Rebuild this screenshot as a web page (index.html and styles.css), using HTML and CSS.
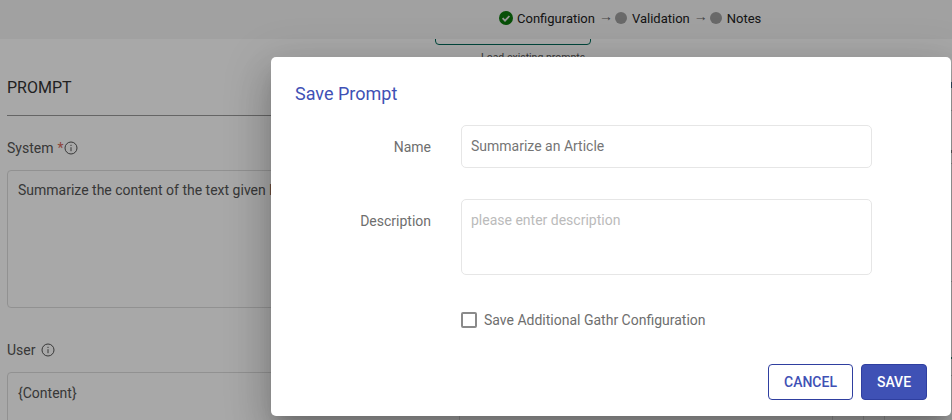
FILE: index.html
```html
<!DOCTYPE html>
<html lang="en">
<head>
    <meta charset="UTF-8">
    <title>Save Prompt</title>
    <link rel="stylesheet" href="styles.css">
</head>
<body>
    <div class="page">
        <!-- Steps -->
        <header class="topbar">
            <div class="step">
                <svg class="step-icon" viewBox="0 0 14 14" width="14" height="14">
                    <circle cx="7" cy="7" r="7" fill="#0d7a0d"/>
                    <path d="M3.6 7.2l2.4 2.4 4.4-4.6" fill="none" stroke="#e4e4e4" stroke-width="1.8"/>
                </svg>
                <span>Configuration</span>
            </div>
            <span class="arrow">→</span>
            <div class="step"><span class="dot"></span><span>Validation</span></div>
            <span class="arrow">→</span>
            <div class="step"><span class="dot"></span><span>Notes</span></div>
        </header>

        <div class="load-box">
            <div class="load-button"></div>
            <div class="load-text">Load existing prompts</div>
        </div>

        <div class="main">
            <!-- Prompt form behind the dialog -->
            <section class="prompt">
                <h3 class="prompt-title">PROMPT</h3>

                <div class="prompt-label">
                    <span>System</span><span class="required">*</span>
                    <svg class="info" viewBox="0 0 14 14" width="14" height="14">
                        <circle cx="7" cy="7" r="6" fill="none" stroke="#555" stroke-width="1"/>
                        <path d="M7 6.2v4M7 3.8v1.2" stroke="#555" stroke-width="1"/>
                    </svg>
                </div>
                <div class="prompt-box system-box">Summarize the content of the text given below</div>

                <div class="prompt-label user-label">
                    <span>User</span>
                    <svg class="info" viewBox="0 0 14 14" width="14" height="14">
                        <circle cx="7" cy="7" r="6" fill="none" stroke="#555" stroke-width="1"/>
                        <path d="M7 6.2v4M7 3.8v1.2" stroke="#555" stroke-width="1"/>
                    </svg>
                </div>
                <div class="prompt-box user-box">{Content}</div>
            </section>

            <!-- Right pane, almost all of it hidden by the dialog -->
            <aside class="side">
                <div class="rule rule-tab"></div>
                <div class="rule rule-line"></div>
                <div class="rule rule-head"></div>
                <div class="rule rule-sub"></div>
                <div class="rule rule-mid"></div>
                <div class="rule rule-teal"></div>
                <div class="rule rule-low"></div>
                <div class="side-table">
                    <div class="side-cell cell-wide"></div>
                    <div class="side-cell cell-mid"></div>
                    <div class="side-cell cell-small"></div>
                </div>
            </aside>
        </div>

        <!-- Dialog -->
        <div class="overlay">
            <div class="modal">
                <h2 class="modal-title">Save Prompt</h2>

                <div class="field name-field">
                    <label class="field-label">Name</label>
                    <input class="field-input" type="text" value="Summarize an Article">
                </div>

                <div class="field description-field">
                    <label class="field-label">Description</label>
                    <textarea class="field-input field-area" placeholder="please enter description"></textarea>
                </div>

                <label class="check-row">
                    <span class="check-box"></span>
                    <span>Save Additional Gathr Configuration</span>
                </label>

                <div class="modal-actions">
                    <button type="button" class="btn btn-outline">CANCEL</button>
                    <button type="button" class="btn btn-primary">SAVE</button>
                </div>
            </div>
        </div>
    </div>
</body>
</html>
```

FILE: styles.css
```css
* {
    box-sizing: border-box;
}

body {
    margin: 0;
    font-family: Roboto, sans-serif;
    color: #333;
}

.page {
    position: relative;
    width: 952px;
    height: 420px;
    overflow: hidden;
    background-color: #fff;
}

/* Steps */
.topbar {
    position: relative;
    z-index: 1;
    height: 39px;
    padding: 0 0 3px 499px;
    display: flex;
    align-items: center;
    gap: 4px;
    font-size: 13px;
    color: #222;
    background-color: #f5f5f5;
}

.step {
    display: flex;
    align-items: center;
    gap: 5px;
}

.step-icon {
    flex: none;
    margin-right: -1px;
}

.dot {
    width: 12px;
    height: 12px;
    border-radius: 50%;
    background-color: #a0a0a0;
}

.arrow {
    width: 12px;
    margin-bottom: 4px;
    font-size: 14px;
    line-height: 14px;
    color: #666;
}

.load-box {
    width: 156px;
    height: 57px;
    margin: -39px 0 0 435px;
    padding-top: 29px;
}

.load-button {
    height: 16px;
    border: 1px solid #006d5b;
    border-radius: 4px;
}

.load-text {
    margin-top: 6px;
    padding-left: 46px;
    font-size: 10.5px;
    white-space: nowrap;
    color: #555;
}

.main {
    display: flex;
    margin-top: -39px;
}

/* Prompt form */
.prompt {
    flex: none;
    width: 460px;
    padding: 39px 0 0 7px;
}

.prompt-title {
    margin: 0;
    height: 59px;
    padding-top: 20px;
    line-height: 22px;
    font-size: 16px;
    font-weight: 400;
    color: #333;
    border-bottom: 1px solid #999;
}

.prompt-label {
    display: flex;
    align-items: center;
    height: 20px;
    margin-top: 22px;
    font-size: 14px;
    color: #555;
}

.required {
    margin-left: 4px;
    color: #d9695a;
}

.info {
    margin-left: 1px;
}

.user-label .info {
    margin-left: 6px;
}

.prompt-box {
    margin-top: 12px;
    padding: 9px 10px;
    font-size: 14px;
    line-height: 20px;
    color: #555;
    white-space: nowrap;
    border: 1px solid #ddd;
    border-radius: 4px;
}

.system-box {
    height: 138px;
}

.user-label {
    margin-top: 32px;
}

.user-box {
    height: 60px;
    padding-top: 10px;
}

/* Right pane */
.side {
    flex: 1;
    display: flex;
    flex-direction: column;
}

.rule {
    height: 1px;
    background-color: #ccc;
}

.rule-tab {
    height: 6px;
    margin-top: 64px;
    background-color: #4a7090;
}

.rule-line {
    margin-top: 22px;
}

.rule-head {
    height: 3px;
    margin-top: 39px;
    background-color: #888;
}

.rule-sub {
    margin-top: 10px;
}

.rule-mid {
    margin-top: 117px;
}

.rule-teal {
    height: 2px;
    margin-top: 75px;
    background-color: #2a8a7a;
}

.rule-low {
    margin-top: 16px;
}

.side-table {
    display: flex;
    margin-top: 40px;
}

.side-cell {
    height: 10px;
    border-right: 1px solid #ddd;
}

.cell-wide {
    width: 373px;
}

.cell-mid {
    width: 31px;
}

.cell-small {
    width: 21px;
}

/* Dialog */
.overlay {
    position: absolute;
    z-index: 2;
    top: 0;
    right: 0;
    bottom: 0;
    left: 0;
    padding: 57px 0 0 271px;
    background-color: rgba(0, 0, 0, 0.34);
}

.modal {
    width: 680px;
    height: 359px;
    padding: 26px 24px 0;
    background-color: #fff;
    border-radius: 5px;
    box-shadow: 0 11px 15px -7px rgba(0,0,0,0.2), 0 24px 38px 3px rgba(0,0,0,0.14), 0 9px 46px 8px rgba(0,0,0,0.12);
}

.modal-title {
    margin: 0;
    font-size: 18px;
    line-height: 22px;
    font-weight: 400;
    color: #3f51b5;
}

.field {
    display: grid;
    grid-template-columns: 136px 411px;
    column-gap: 30px;
}

.name-field {
    margin-top: 20px;
}

.description-field {
    margin-top: 31px;
}

.field-label {
    padding-top: 13px;
    text-align: right;
    font-size: 14px;
    line-height: 18px;
    color: #6e6e6e;
}

.field-input {
    display: block;
    width: 100%;
    height: 43px;
    padding: 0 9px 1px;
    font-family: Roboto, sans-serif;
    font-size: 14px;
    color: #757575;
    border: 1px solid #e6e6e6;
    border-radius: 5px;
    outline: none;
}

.field-area {
    height: 76px;
    padding-top: 12px;
    resize: none;
}

.field-area::placeholder {
    color: #bbb;
}

.check-row {
    display: flex;
    align-items: center;
    gap: 7px;
    margin: 36px 0 0 166px;
    font-size: 14px;
    line-height: 18px;
    color: #6e6e6e;
}

.check-box {
    width: 16px;
    height: 16px;
    border: 2px solid #8a8a8a;
    border-radius: 2px;
}

.modal-actions {
    display: flex;
    justify-content: flex-end;
    gap: 8px;
    margin-top: 35px;
}

.btn {
    height: 36px;
    padding: 0;
    font-family: Roboto, sans-serif;
    font-size: 14px;
    font-weight: 500;
    border-radius: 4px;
    border: 1px solid #2f3fa0;
}

.btn-outline {
    width: 85px;
    color: #3f51b5;
    background-color: #fff;
}

.btn-primary {
    width: 66px;
    color: #fff;
    background-color: #3f51b5;
}
```
